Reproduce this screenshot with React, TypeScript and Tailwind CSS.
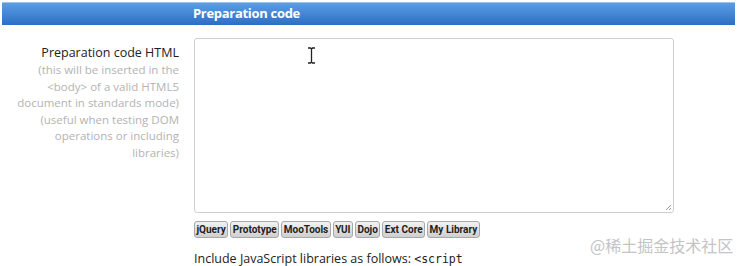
import React from "react";

const libs = ["jQuery", "Prototype", "MooTools", "YUI", "Dojo", "Ext Core", "My Library"];

export default function App() {
  return (
    <div className="w-[740px] h-[266px] bg-white overflow-hidden relative" style={{ fontFamily: '"Open Sans", "Noto Sans", sans-serif' }}>
      <div className="pt-[2px] px-[2px] pr-[5px]">
        <div className="h-[23px] border-t border-[#9cc3ee] bg-gradient-to-b from-[#5c9de2] to-[#2b6fc6] flex items-center pl-[191px]">
          <span className="text-white font-bold text-[13px] tracking-[-0.3px]">Preparation code</span>
        </div>
      </div>
      <div className="flex mt-[13px]">
        <div className="w-[179px] text-right pt-[6px]">
          <div className="text-[12.5px] leading-[18px] text-[#222]">Preparation code HTML</div>
          <div className="text-[11.5px] leading-[16.5px] text-[#b3b3b3] whitespace-nowrap">
            <div>(this will be inserted in the</div>
            <div>&lt;body&gt; of a valid HTML5</div>
            <div>document in standards mode)</div>
            <div>(useful when testing DOM</div>
            <div>operations or including</div>
            <div>libraries)</div>
          </div>
        </div>
        <div className="ml-[15px] flex flex-col">
          <div className="relative w-[480px] h-[175px] border border-[#cfcfcf] rounded-[3px]">
            <svg className="absolute left-[112px] top-[8px]" width="9" height="17" viewBox="0 0 9 17">
              <path d="M1 1h2.5l1 1 1-1H8M4.5 2v13M1 16h2.5l1-1 1 1H8" stroke="#222" strokeWidth="1.3" fill="none" />
            </svg>
            <svg className="absolute right-[1px] bottom-[1px]" width="8" height="8" viewBox="0 0 8 8">
              <path d="M7 2L2 7M7 5L5 7" stroke="#999" strokeWidth="1" />
            </svg>
          </div>
          <div className="flex gap-[2px] mt-[8px]" style={{ fontFamily: 'Roboto, "Liberation Sans", sans-serif' }}>
            {libs.map((l) => (
              <span
                key={l}
                className="h-[17px] px-[1.5px] flex items-center text-[10px] font-bold text-[#222] border border-[#a8a8a8] rounded-[3px] bg-gradient-to-b from-[#f2f2f2] to-[#cfcfcf]"
              >
                {l}
              </span>
            ))}
          </div>
          <div className="mt-[12px] text-[12.5px] text-[#222] leading-[18px] whitespace-nowrap">
            Include JavaScript libraries as follows: <span className="text-[11.5px]" style={{ fontFamily: '"DejaVu Sans Mono", monospace' }}>&lt;script</span>
          </div>
        </div>
      </div>
      <div className="absolute left-[590px] top-[233px] text-[16px] leading-[24px] text-[#c4c4c4]" style={{ fontFamily: '"Noto Sans CJK SC", sans-serif' }}>
        @稀土掘金技术社区
      </div>
    </div>
  );
}
